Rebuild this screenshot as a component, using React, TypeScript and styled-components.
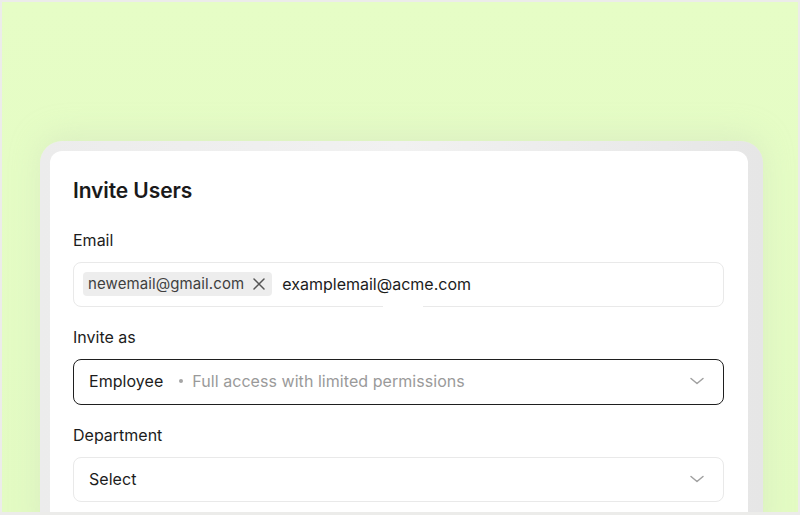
import React from "react";
import styled, { createGlobalStyle } from "styled-components";

const Global = createGlobalStyle`
  html, body { margin: 0; padding: 0; }
  body { font-family: Inter, "Noto Sans", sans-serif; -webkit-font-smoothing: antialiased; }
  * { box-sizing: border-box; }
`;

const Frame = styled.div`
  width: 800px;
  height: 515px;
  overflow: hidden;
  border: 2px solid #ececea;
  border-bottom-width: 3px;
  background: linear-gradient(180deg, #e6fdc6 0%, #e3fbc3 100%);
  padding: 139px 35px 0 38px;
`;

const Shell = styled.div`
  height: 400px;
  border-radius: 22px 22px 0 0;
  background: linear-gradient(90deg, #ececec 0%, #f1f1f1 50%, #e6e6e6 100%);
  padding: 10px 15px 0 10px;
  box-shadow: 0 -6px 30px rgba(200, 215, 190, 0.35);
`;

const Card = styled.div`
  height: 100%;
  background: #ffffff;
  border-radius: 12px 12px 0 0;
  padding: 28px 24px 0 23px;
  display: flex;
  flex-direction: column;
  gap: 20px;
`;

const Title = styled.h1`
  margin: 0 0 7px;
  font-size: 21px;
  line-height: 24px;
  font-weight: 600;
  color: #1a1a1a;
  letter-spacing: -0.1px;
`;

const Field = styled.div`
  display: flex;
  flex-direction: column;
  gap: 12px;
`;

const Label = styled.label`
  font-size: 16px;
  line-height: 20px;
  font-weight: 400;
  color: #1c1c1c;
`;

const Box = styled.div<{ $active?: boolean }>`
  position: relative;
  height: ${(p) => (p.$active ? 46 : 45)}px;
  border: ${(p) => (p.$active ? "1.5px solid #1f1f1f" : "1px solid #e9e9e9")};
  border-radius: 8px;
  display: flex;
  align-items: center;
  padding: 0 18px 2px 15px;
  font-size: 16px;
  color: #1c1c1c;
`;

const TagBox = styled(Box)`
  padding-left: 9px;
  gap: 10px;
`;

const Chip = styled.span`
  display: inline-flex;
  align-items: center;
  gap: 8px;
  height: 24px;
  padding: 0 6px 0 5px;
  background: #ededed;
  border-radius: 4px;
  font-size: 15px;
  letter-spacing: 0.1px;
  color: #3f3f3f;
`;

const Typed = styled.span`
  font-size: 16px;
  color: #1c1c1c;
`;

const Value = styled.span`
  flex: 1;
  display: flex;
  align-items: center;
  gap: 12px;
  letter-spacing: 0.05px;
`;

const Hint = styled.span`
  color: #9a9a9a;
`;

const Dot = styled.span`
  width: 4px;
  height: 4px;
  border-radius: 50%;
  background: #a5a5a5;
  margin: 0 -3px 0 4px;
`;

const Blob = styled.span`
  position: absolute;
  left: 309px;
  bottom: -3px;
  width: 40px;
  height: 12px;
  background: #fff;
  border-radius: 8px 8px 0 0;
`;

const Chevron = () => (
  <svg width="16" height="16" viewBox="0 0 16 16" fill="none">
    <path d="M2 5.5 L8 10.5 L14 5.5" stroke="#a0a0a0" strokeWidth="1.5" strokeLinecap="round" strokeLinejoin="round" />
  </svg>
);

const Close = () => (
  <svg width="14" height="14" viewBox="0 0 14 14" fill="none">
    <path d="M2 2 L12 12 M12 2 L2 12" stroke="#555" strokeWidth="1.5" strokeLinecap="round" />
  </svg>
);

export default function App() {
  return (
    <>
      <Global />
      <Frame>
        <Shell>
          <Card>
            <Title>Invite Users</Title>
            <Field>
              <Label>Email</Label>
              <TagBox>
                <Chip>
                  newemail@gmail.com
                  <Close />
                </Chip>
                <Typed>examplemail@acme.com</Typed>
                <Blob />
              </TagBox>
            </Field>
            <Field>
              <Label>Invite as</Label>
              <Box $active>
                <Value>
                  Employee
                  <Dot />
                  <Hint>Full access with limited permissions</Hint>
                </Value>
                <Chevron />
              </Box>
            </Field>
            <Field>
              <Label>Department</Label>
              <Box>
                <Value>Select</Value>
                <Chevron />
              </Box>
            </Field>
          </Card>
        </Shell>
      </Frame>
    </>
  );
}
